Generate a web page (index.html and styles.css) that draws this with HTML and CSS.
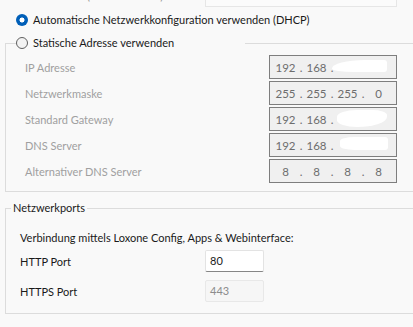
FILE: index.html
```html
<!DOCTYPE html>
<html lang="de">
  <head>
    <meta charset="UTF-8" />
    <title>Netzwerk</title>
    <link rel="stylesheet" href="styles.css">
  </head>
  <body>
    <div class="panel">
      <div class="mac-row">
        <span class="mac-label">MAC-Adresse (Seriennummer)</span>
        <div class="mac-box"></div>
      </div>

      <label class="radio-line">
        <span class="radio checked"></span>Automatische Netzwerkkonfiguration verwenden (DHCP)
      </label>

      <fieldset class="group static-group">
        <legend class="radio-line static-legend">
          <span class="radio"></span>Statische Adresse verwenden
        </legend>

        <div class="ip-row">
          <span class="muted">IP Adresse</span>
          <div class="ip-box">
            <span class="oct">192</span><span class="dot">.</span><span class="oct">168</span><span class="dot">.</span><span class="oct"></span><span class="dot">.</span><span class="oct"></span>
            <span class="blot blot-ip"></span>
          </div>
        </div>
        <div class="ip-row">
          <span class="muted">Netzwerkmaske</span>
          <div class="ip-box">
            <span class="oct">255</span><span class="dot">.</span><span class="oct">255</span><span class="dot">.</span><span class="oct">255</span><span class="dot">.</span><span class="oct">0</span>
          </div>
        </div>
        <div class="ip-row">
          <span class="muted">Standard Gateway</span>
          <div class="ip-box">
            <span class="oct">192</span><span class="dot">.</span><span class="oct">168</span><span class="dot">.</span><span class="oct"></span><span class="dot">.</span><span class="oct"></span>
            <span class="blot blot-gw"></span>
          </div>
        </div>
        <div class="ip-row">
          <span class="muted">DNS Server</span>
          <div class="ip-box">
            <span class="oct">192</span><span class="dot">.</span><span class="oct">168</span><span class="dot">.</span><span class="oct"></span><span class="dot">.</span><span class="oct"></span>
            <span class="blot blot-dns"></span>
          </div>
        </div>
        <div class="ip-row">
          <span class="muted">Alternativer DNS Server</span>
          <div class="ip-box">
            <span class="oct">8</span><span class="dot">.</span><span class="oct">8</span><span class="dot">.</span><span class="oct">8</span><span class="dot">.</span><span class="oct">8</span>
          </div>
        </div>
      </fieldset>

      <fieldset class="group ports-group">
        <legend class="ports-legend">Netzwerkports</legend>
        <p class="hint">Verbindung mittels Loxone Config, Apps &amp; Webinterface:</p>
        <div class="port-row">
          <span class="port-label">HTTP Port</span>
          <div class="port-box">80</div>
        </div>
        <div class="port-row">
          <span class="port-label">HTTPS Port</span>
          <div class="port-box disabled">443</div>
        </div>
      </fieldset>
    </div>
  </body>
</html>
```

FILE: styles.css
```css
* {
  margin: 0;
  padding: 0;
  box-sizing: border-box;
}

body {
  background: #f9f9f9;
  color: #1a1a1a;
  font-family: "Lato", "Noto Sans", sans-serif;
  font-size: 11px;
}

.panel {
  width: 413px;
  height: 327px;
  overflow: hidden;
}

/* cut off row at the top */
.mac-row {
  display: flex;
  align-items: center;
  height: 24px;
  margin-top: -17px;
}

.mac-label {
  width: 188px;
  margin-left: 17px;
  margin-top: 1px;
  color: #9a9a9a;
}

.mac-box {
  width: 192px;
  height: 24px;
  background: #fbfbfb;
  border: 1px solid #e6e6e6;
}

.radio-line {
  display: flex;
  align-items: center;
  height: 16px;
  line-height: 16px;
}

label.radio-line {
  margin: 5px 0 0 16px;
}

.radio {
  width: 12px;
  height: 12px;
  border-radius: 50%;
  border: 1px solid #5f5f5f;
  background: #f3f3f3;
  margin-right: 5px;
  flex-shrink: 0;
}

.radio.checked {
  border: none;
  background: radial-gradient(circle, #fff 0 2.2px, #005fb8 2.8px);
}

.group {
  border: 1px solid #dcdcdc;
  border-right: none;
  margin-left: 5px;
}

.static-group {
  margin-top: 7px;
  padding: 4px 0 8px 0;
}

.static-legend {
  margin-left: 10px;
  width: 229px;
}

.ip-row {
  display: flex;
  align-items: center;
  height: 24px;
  margin-bottom: 2px;
}

.ip-row:last-child {
  margin-bottom: 0;
}

.muted {
  flex: 1;
  padding-left: 19px;
  color: #a0a0a0;
}

.ip-box {
  position: relative;
  display: flex;
  align-items: center;
  width: 128px;
  height: 24px;
  margin-right: 16px;
  padding-left: 4px;
  background: #f0f0f0;
  border: 1px solid #7e7e7e;
  color: #6d6d6d;
  font-size: 11.5px;
}

.oct {
  width: 23px;
  text-align: center;
}

.dot {
  width: 8px;
  text-align: center;
}

/* redacted parts of the addresses */
.blot {
  position: absolute;
  background: #fff;
}

.blot-ip {
  left: 62px;
  top: 4px;
  width: 55px;
  height: 12px;
  border-radius: 60% 3px 3px 40% / 70% 3px 3px 30%;
}

.blot-gw {
  left: 67px;
  top: 2px;
  width: 50px;
  height: 17px;
  border-radius: 40% 30% 60% 40%;
}

.blot-dns {
  left: 70px;
  top: 3px;
  width: 48px;
  height: 13px;
  border-radius: 30% 3px 3px 30%;
}

.ports-group {
  margin-top: 8px;
  padding: 14px 0 11px 0;
}

.ports-legend {
  margin-left: 5px;
  padding: 0 2px;
  line-height: 16px;
}

.hint {
  margin-left: 14px;
  line-height: 16px;
  margin-bottom: 4px;
}

.port-row {
  display: flex;
  align-items: center;
  height: 22px;
  margin-bottom: 8px;
}

.port-row:last-child {
  margin-bottom: 0;
}

.port-label {
  width: 185px;
  margin-left: 14px;
}

.port-box {
  width: 59px;
  height: 22px;
  padding-left: 4px;
  line-height: 20px;
  background: #fff;
  border: 1px solid #e3e3e3;
  border-bottom-color: #868686;
  border-radius: 2px;
}

.port-box.disabled {
  background: #f6f6f6;
  border-color: #e8e8e8;
  color: #8c8c8c;
}
```
